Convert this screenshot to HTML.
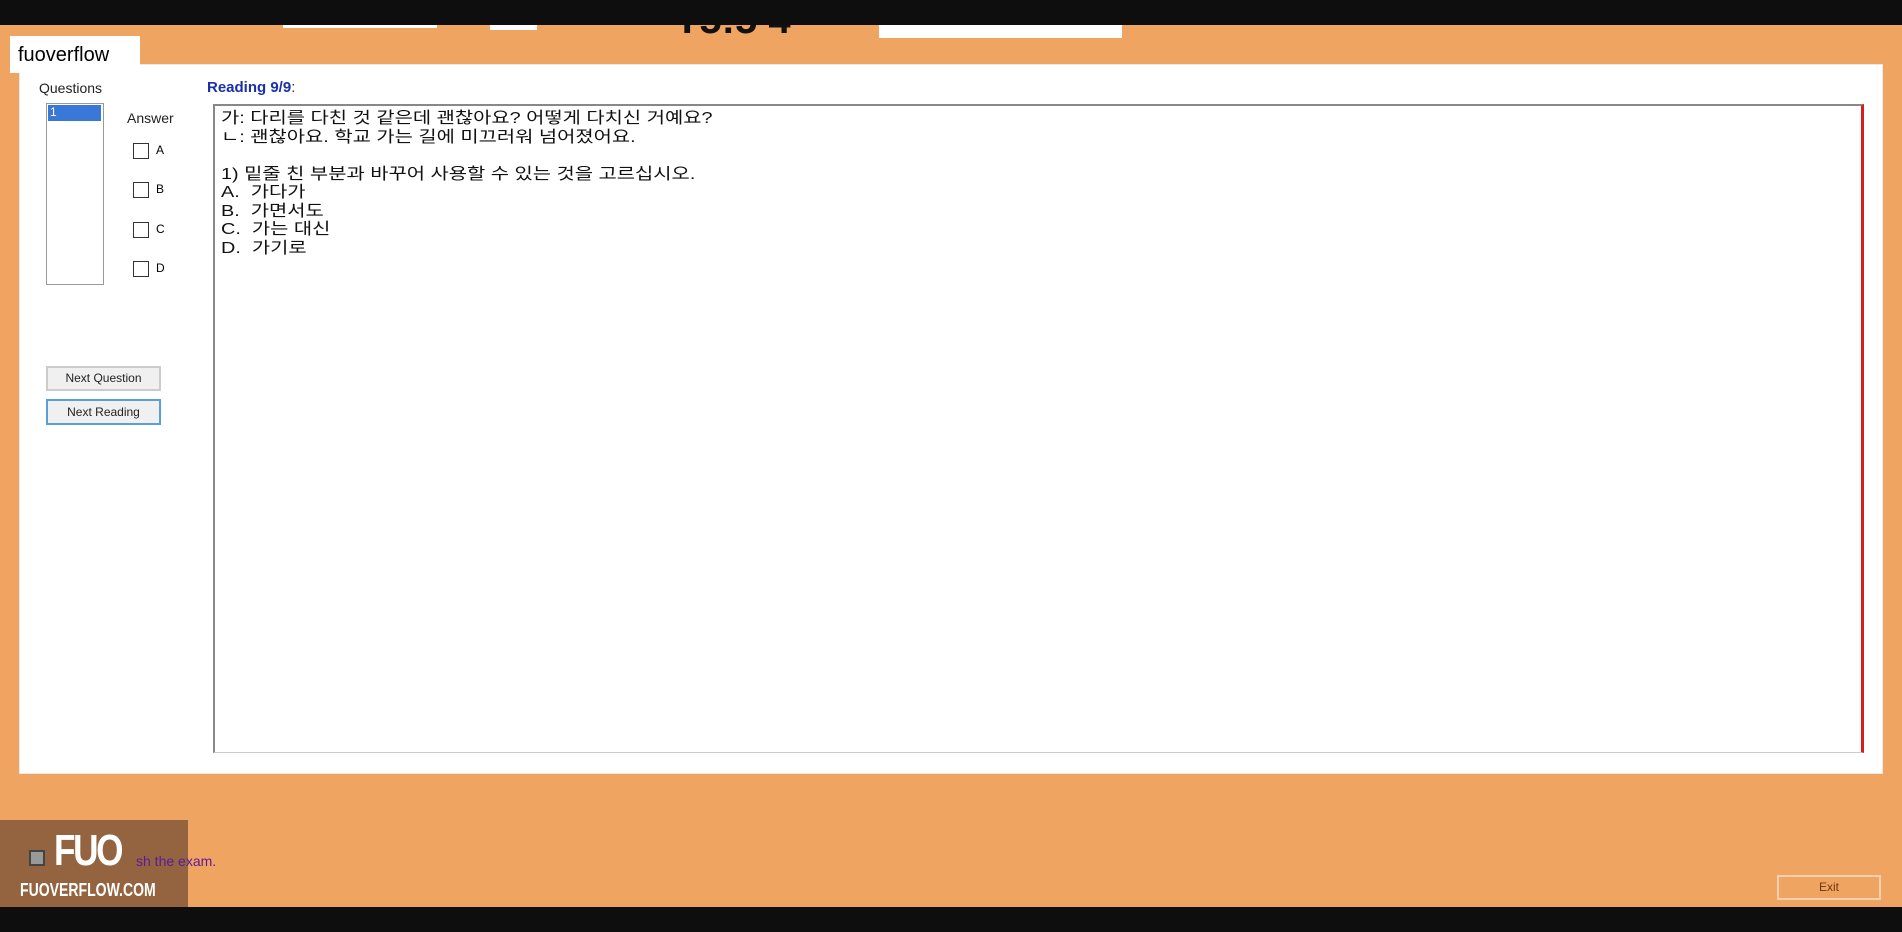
<!DOCTYPE html>
<html><head><meta charset="utf-8"><style>
*{margin:0;padding:0;box-sizing:border-box}
body{width:1902px;height:932px;background:#f0a462;position:relative;overflow:hidden;font-family:"Liberation Sans","Noto Sans CJK KR",sans-serif}
.a{position:absolute}
.t{font-size:15px;color:#222}
.cb{position:absolute;width:16px;height:16px;border:1px solid #333;background:#fff}
.btn{position:absolute;background:#f0f0f0;border:2px solid #ccc;font-size:12px;text-align:center;color:#222}
</style></head><body>
<div class="a" style="left:0;top:0;width:1902px;height:25px;background:#0e0e0e;z-index:2"></div>
<div class="a" style="left:283px;top:25px;width:154px;height:3px;background:#fff"></div>
<div class="a" style="left:490px;top:25px;width:47px;height:5px;background:#fff"></div>
<div class="a" style="left:675px;top:0px;height:40px;overflow:hidden;font:bold 40px 'Liberation Sans';line-height:40px;color:#111">T5:5 4</div>
<div class="a" style="left:879px;top:25px;width:243px;height:13px;background:#fff"></div>
<div class="a" style="left:19px;top:64px;width:1864px;height:710px;background:#fff;border:1px solid #e8e8e8"></div>
<div class="a" style="left:10px;top:36px;width:130px;height:37px;background:#fff;font-size:20px;padding:8px 0 0 8px;color:#000">fuoverflow</div>
<div class="a t" style="left:39px;top:80px;font-size:14px">Questions</div>
<div class="a" style="left:46px;top:103px;width:58px;height:182px;border:1px solid #999;background:#fff"></div>
<div class="a" style="left:48px;top:105px;width:53px;height:16px;background:#3a78d8;color:#fff;font-size:12px;padding-left:2px">1</div>
<div class="a t" style="left:127px;top:110px;font-size:14px">Answer</div>
<div class="cb" style="left:133px;top:143px"></div><div class="a" style="left:156px;top:143px;font-size:12px">A</div>
<div class="cb" style="left:133px;top:182px"></div><div class="a" style="left:156px;top:182px;font-size:12px">B</div>
<div class="cb" style="left:133px;top:222px"></div><div class="a" style="left:156px;top:222px;font-size:12px">C</div>
<div class="cb" style="left:133px;top:261px"></div><div class="a" style="left:156px;top:261px;font-size:12px">D</div>
<div class="btn" style="left:46px;top:366px;width:115px;height:25px;line-height:21px">Next Question</div>
<div class="btn" style="left:46px;top:399px;width:115px;height:26px;line-height:22px;border:2px solid #5aa0d8">Next Reading</div>
<div class="a" style="left:207px;top:79px;font-size:15px;font-weight:bold;color:#1a2fa8">Reading 9/9<span style="font-weight:normal;color:#333">:</span></div>
<div class="a" style="left:213px;top:104px;width:1651px;height:649px;border:2px solid #888;border-right:3px solid #d02020;border-bottom:1px solid #ccc;background:#fff"></div>
<div class="a" style="left:221px;top:110px;font-size:16px;line-height:18.5px;color:#111;white-space:pre;transform:scaleX(1.24);transform-origin:left top">가: 다리를 다친 것 같은데 괜찮아요? 어떻게 다치신 거예요?
ㄴ: 괜찮아요. 학교 가는 길에 미끄러워 넘어졌어요.

1) 밑줄 친 부분과 바꾸어 사용할 수 있는 것을 고르십시오.
A.  가다가
B.  가면서도
C.  가는 대신
D.  가기로</div>
<div class="a" style="left:0;top:820px;width:188px;height:87px;background:#946440"></div>
<div class="a" style="left:29px;top:850px;width:16px;height:16px;background:#999;border:2px solid #444"></div>
<div class="a" style="left:136px;top:853px;font-size:14px;color:#5a1a9a">sh the exam.</div>
<div class="a" style="left:54px;top:826px;font:bold 44px 'Liberation Sans';color:#fff;letter-spacing:-3px;transform:scaleX(.8);transform-origin:left">FUO</div>
<div class="a" style="left:20px;top:880px;font:bold 18px 'Liberation Sans';color:#fff;transform:scaleX(.78);transform-origin:left">FUOVERFLOW.COM</div>
<div class="btn" style="left:1777px;top:875px;width:104px;height:25px;background:#f0a462;border:2px solid #f4d0b0;font-size:12px;line-height:21px;color:#6a3a10">Exit</div>
<div class="a" style="left:0;top:907px;width:1902px;height:25px;background:#0e0e0e"></div>
</body></html>
